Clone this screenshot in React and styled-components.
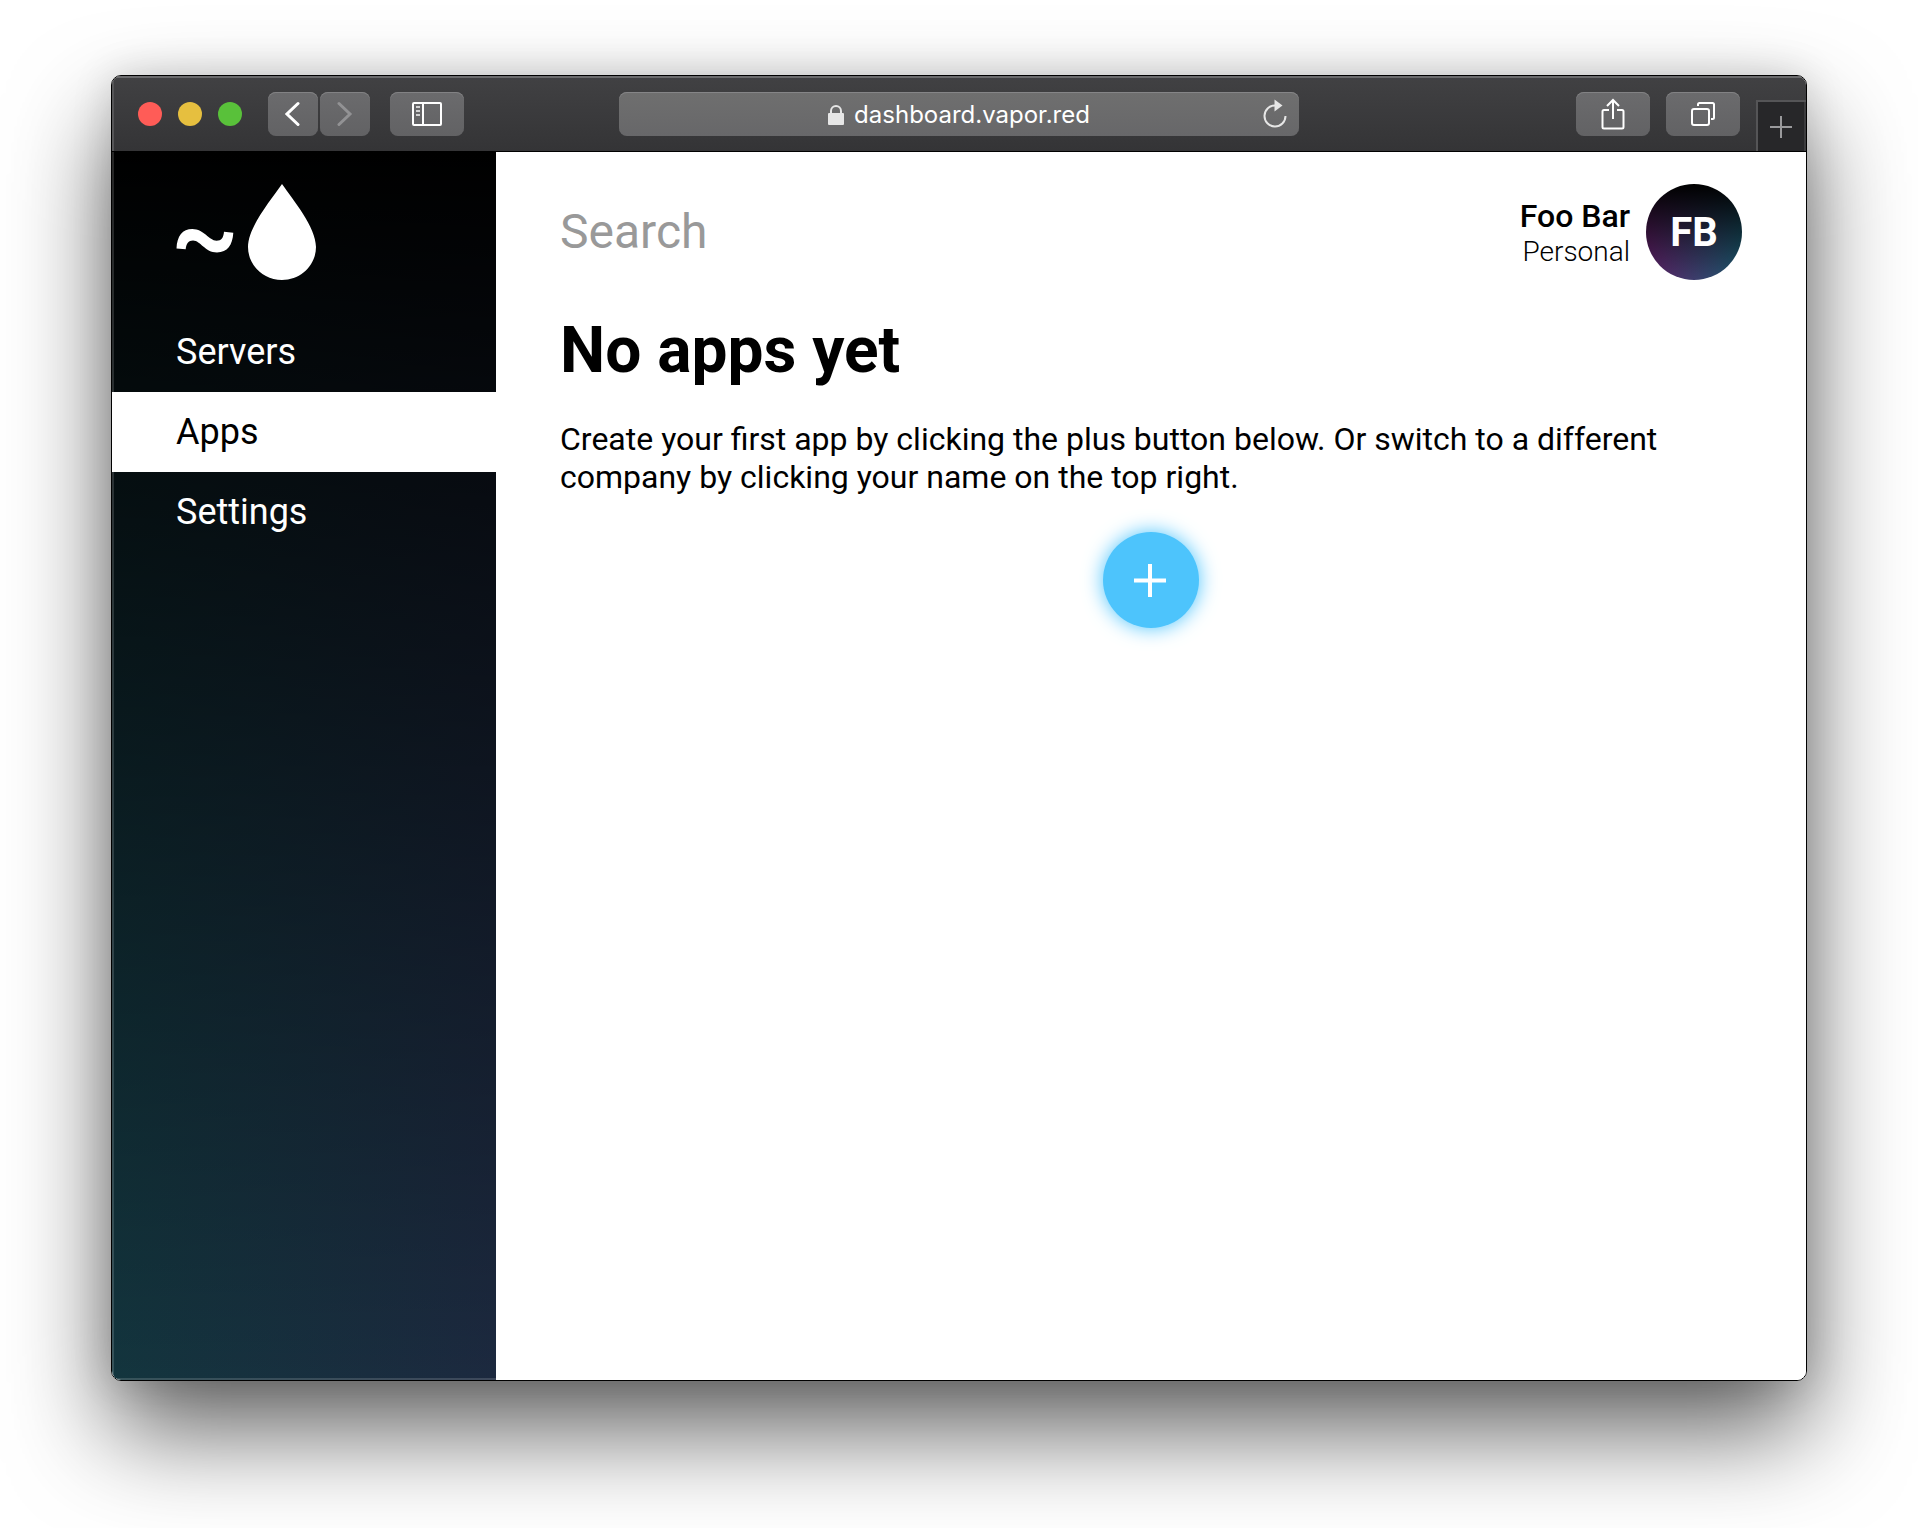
import React from 'react';
import styled, { createGlobalStyle } from 'styled-components';

const GlobalStyle = createGlobalStyle`
  *, *::before, *::after { box-sizing: border-box; }
  html, body, #root { height: 100%; }
  body {
    margin: 0;
    background: #fff;
    color: #000;
    font-family: Roboto, "Liberation Sans", sans-serif;
    overflow: hidden;
  }
  button, input { font: inherit; border: 0; padding: 0; }
`;

const Desktop = styled.div`
  height: 100%;
  padding: 75px 111px 147px;
  display: flex;
`;

const BrowserWindow = styled.div`
  flex: 1;
  display: flex;
  flex-direction: column;
  border: 1px solid #000;
  border-radius: 10px;
  overflow: hidden;
  box-shadow: 0 50px 100px rgba(0, 0, 0, 0.62), 0 0 40px rgba(0, 0, 0, 0.14);
`;

const Toolbar = styled.header`
  height: 76px;
  flex: none;
  display: grid;
  grid-template-columns: 1fr minmax(240px, 680px) 1fr;
  align-items: center;
  background: linear-gradient(#414143, #343436);
  border-bottom: 1px solid #000;
  box-shadow: inset 0 2px 0 #6b6b6d, inset 2px 0 0 #555557;
`;

const ToolGroup = styled.div`
  display: flex;
  align-items: center;
  height: 100%;
  gap: ${(p) => p.$gap || 0}px;
  padding-left: ${(p) => p.$inset || 0}px;
  justify-content: ${(p) => (p.$end ? 'flex-end' : 'flex-start')};
`;

const Light = styled.button`
  width: 24px;
  height: 24px;
  border-radius: 50%;
  background: ${(p) => p.$color};
`;

const ToolButton = styled.button`
  width: ${(p) => (p.$narrow ? 50 : 74)}px;
  height: 44px;
  display: grid;
  place-items: center;
  border-radius: 8px;
  color: ${(p) => (p.disabled ? '#929294' : '#fff')};
  background: linear-gradient(#6b6b6d, #626264);
  box-shadow: inset 0 1px 0 #828284;
`;

const AddressBar = styled.div`
  height: 44px;
  display: grid;
  grid-template-columns: 32px 1fr 32px;
  align-items: center;
  padding: 0 8px;
  border-radius: 8px;
  background: linear-gradient(#6f6f6f, #676769);
  box-shadow: inset 0 1px 0 #858587;
`;

const Address = styled.div`
  grid-column: 2;
  display: flex;
  align-items: center;
  justify-content: center;
  gap: 10px;
  color: #fff;
  font: 400 24px/46px Inter, Roboto, sans-serif;
`;

const Reload = styled.button`
  display: grid;
  place-items: center;
  background: none;
`;

const NewTab = styled.button`
  align-self: flex-end;
  width: 50px;
  height: 51px;
  padding-right: 2px;
  display: grid;
  place-items: center;
  background: #272729;
  border-top: 2px solid #555557;
  border-left: 2px solid #555557;
  box-shadow: inset -2px 0 0 #3c3c3e;
`;

const Page = styled.div`
  flex: 1;
  min-height: 0;
  display: flex;
  background: #fff;
`;

const Sidebar = styled.aside`
  width: 384px;
  flex: none;
  padding-top: 32px;
  background: linear-gradient(#000, rgba(0, 0, 0, 0)), linear-gradient(to right, #13353e, #1c293f);
  box-shadow: inset 2px -2px 0 rgba(255, 255, 255, 0.15);
`;

const Logo = styled.a`
  display: block;
  height: 96px;
  margin: 0 64px 32px;
`;

const NavItem = styled.a`
  display: block;
  padding: 0 64px;
  font-size: 36px;
  line-height: 80px;
  text-decoration: none;
  color: ${(p) => (p.$active ? '#000' : '#fff')};
  background: ${(p) => (p.$active ? '#fff' : 'transparent')};
`;

const Main = styled.main`
  flex: 1;
  min-width: 0;
  padding: 32px 64px;
`;

const TopRow = styled.div`
  display: flex;
  align-items: center;
  justify-content: space-between;
  gap: 32px;
`;

const Search = styled.input`
  flex: 1;
  min-width: 0;
  height: 96px;
  padding-bottom: 2px;
  font-size: 48px;
  background: transparent;
  outline: none;
  &::placeholder { color: #999; opacity: 1; }
`;

const Account = styled.button`
  display: flex;
  align-items: center;
  gap: 16px;
  background: none;
  text-align: right;
  color: #000;
`;

const Name = styled.span`
  display: block;
  font-size: 32px;
  font-weight: 500;
  line-height: 38px;
`;

const Team = styled.span`
  display: block;
  font-size: 28px;
  font-weight: 300;
  line-height: 33px;
`;

const Avatar = styled.span`
  width: 96px;
  height: 96px;
  border-radius: 50%;
  background: linear-gradient(#000, rgba(0, 0, 0, 0)), linear-gradient(to right, #5f2068, #1c5a70);
  color: #fff;
  font-size: 40px;
  font-weight: 700;
  line-height: 98px;
  text-align: center;
`;

const Title = styled.h1`
  margin: 32px 0 30px;
  font-size: 64px;
  font-weight: 700;
  line-height: 78px;
`;

const Text = styled.p`
  margin: 0 0 36px;
  font-size: 32px;
  line-height: 38px;
`;

const AddButton = styled.button`
  display: grid;
  place-items: center;
  width: 96px;
  height: 96px;
  margin: 0 auto;
  border-radius: 50%;
  background: #4dc4fc;
  box-shadow: 0 0 20px #4dc4fc;
`;

const Icon = ({ w, h, sw = 2, children }) => (
  <svg width={w} height={h} viewBox={`0 0 ${w} ${h}`} fill="none" stroke="currentColor" strokeWidth={sw} aria-hidden="true">
    {children}
  </svg>
);

const nav = [
  { label: 'Servers' },
  { label: 'Apps', active: true },
  { label: 'Settings' },
];

export default function App() {
  return (
    <>
      <GlobalStyle />
      <Desktop>
        <BrowserWindow>
          <Toolbar>
            <ToolGroup $gap={20} $inset={26}>
              <ToolGroup $gap={16}>
                <Light $color="#ff5c57" aria-label="Close" />
                <Light $color="#e6bf3f" aria-label="Minimize" />
                <Light $color="#59c13a" aria-label="Zoom" />
              </ToolGroup>
              <ToolGroup $gap={2} $inset={6}>
                <ToolButton $narrow aria-label="Back">
                  <Icon w={16} h={26} sw={3}><path d="M13 2.500 2 13l11 10.500" strokeLinecap="round" /></Icon>
                </ToolButton>
                <ToolButton $narrow disabled aria-label="Forward">
                  <Icon w={16} h={26} sw={3}><path d="M2 2.500 13 13 2 23.500" strokeLinecap="round" /></Icon>
                </ToolButton>
              </ToolGroup>
              <ToolButton aria-label="Show sidebar">
                <Icon w={30} h={24}>
                  <rect x="1" y="1" width="28" height="22" rx="1" />
                  <path d="M11 1v22" />
                  <path d="M4 5h4M4 9h4M4 13h4" opacity=".7" />
                </Icon>
              </ToolButton>
            </ToolGroup>
            <AddressBar>
              <Address>
                <svg width="16" height="20" viewBox="0 0 16 20" aria-hidden="true">
                  <path d="M3 10V6a5 5 0 0 1 10 0V10" fill="none" stroke="#e6e6e6" strokeWidth="2" />
                  <rect y="8" width="16" height="12" rx="1" fill="#e6e6e6" />
                </svg>
                <span>dashboard.vapor.red</span>
              </Address>
              <Reload aria-label="Reload">
                <svg width="24" height="36" viewBox="0 0 24 36" aria-hidden="true">
                  <path d="M12.500 8.500A10.500 10.500 0 1 0 22.500 19" fill="none" stroke="#e6e6e6" strokeWidth="2" />
                  <path d="M11.500 2.500v12l8-6z" fill="#e6e6e6" />
                </svg>
              </Reload>
            </AddressBar>
            <ToolGroup $gap={16} $end>
              <ToolButton aria-label="Share">
                <Icon w={24} h={32}>
                  <path d="M8 12H3a1.500 1.500 0 0 0-1.500 1.500v15.500A1.500 1.500 0 0 0 3 30.500h18a1.500 1.500 0 0 0 1.500-1.500V13.500A1.500 1.500 0 0 0 21 12h-5M12 21V2M6 8l6-6 6 6" />
                </Icon>
              </ToolButton>
              <ToolButton aria-label="Show tabs">
                <Icon w={24} h={24}>
                  <rect x="1" y="7" width="17" height="16" rx="2" />
                  <path d="M7 4V2.500A1.500 1.500 0 0 1 8.500 1H21.500A1.500 1.500 0 0 1 23 2.500V15.500A1.500 1.500 0 0 1 21.500 17H20" />
                </Icon>
              </ToolButton>
              <NewTab aria-label="New tab">
                <svg width="22" height="22" viewBox="0 0 22 22" aria-hidden="true">
                  <path d="M11 0v22M0 11h22" stroke="#9a9a9c" strokeWidth="2" />
                </svg>
              </NewTab>
            </ToolGroup>
          </Toolbar>
          <Page>
            <Sidebar>
              <Logo href="#" aria-label="Home">
                <svg width="140" height="96" viewBox="0 0 140 96" aria-hidden="true">
                  <path d="M.5 64.500C1 52 6.500 45 16.300 45C28 45 33 56.700 40.500 56.700C45.500 56.700 47.500 53.500 48 47.700L57.300 48.700C56.500 61 51.500 68.400 41 68.400C29 68.400 24.500 56.400 17 56.400C12.500 56.400 10.200 59.500 9.700 65.300Z" fill="#fff" />
                  <path d="M106 0C117 16 140 43 140 63c0 18-15 33-34 33S72 81 72 63C72 43 95 16 106 0z" fill="#fff" />
                </svg>
              </Logo>
              <nav>
                {nav.map((item) => (
                  <NavItem key={item.label} href="#" $active={item.active} aria-current={item.active ? 'page' : undefined}>
                    {item.label}
                  </NavItem>
                ))}
              </nav>
            </Sidebar>
            <Main>
              <TopRow>
                <Search type="search" placeholder="Search" aria-label="Search" />
                <Account>
                  <span>
                    <Name>Foo Bar</Name>
                    <Team>Personal</Team>
                  </span>
                  <Avatar>FB</Avatar>
                </Account>
              </TopRow>
              <Title>No apps yet</Title>
              <Text>
                Create your first app by clicking the plus button below. Or switch to a different company by clicking your name on the top right.
              </Text>
              <AddButton aria-label="Create app">
                <svg width="34" height="34" viewBox="0 0 34 34" aria-hidden="true">
                  <path d="M16 1v33M0 17.500h32" stroke="#fff" strokeWidth="4" />
                </svg>
              </AddButton>
            </Main>
          </Page>
        </BrowserWindow>
      </Desktop>
    </>
  );
}
